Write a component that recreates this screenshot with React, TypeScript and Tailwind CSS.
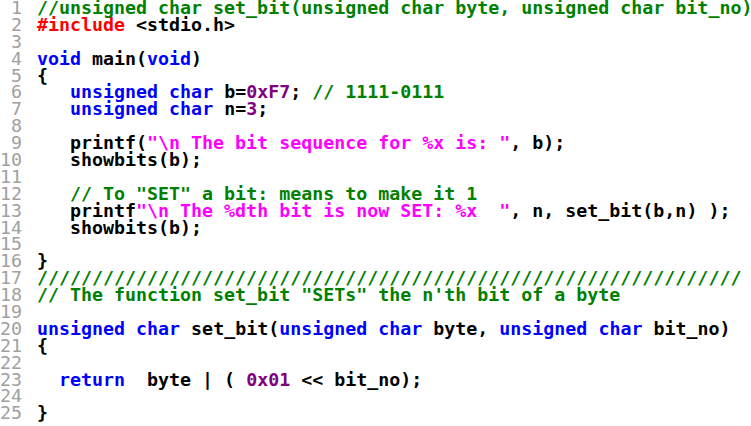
import React from "react";

type Seg = { t: string; c?: "kw" | "cm" | "st" | "nu" | "pp" };

const colors: Record<string, string> = {
  kw: "text-[#0000ff]",
  cm: "text-[#008000]",
  st: "text-[#ff00ff]",
  nu: "text-[#800080]",
  pp: "text-[#ff0000]",
};

const lines: Seg[][] = [
  [{ t: "//unsigned char set_bit(unsigned char byte, unsigned char bit_no)", c: "cm" }],
  [{ t: "#include", c: "pp" }, { t: " <stdio.h>" }],
  [],
  [{ t: "void", c: "kw" }, { t: " main(" }, { t: "void", c: "kw" }, { t: ")" }],
  [{ t: "{" }],
  [
    { t: "   " },
    { t: "unsigned", c: "kw" },
    { t: " " },
    { t: "char", c: "kw" },
    { t: " b=" },
    { t: "0xF7", c: "nu" },
    { t: "; " },
    { t: "// 1111-0111", c: "cm" },
  ],
  [
    { t: "   " },
    { t: "unsigned", c: "kw" },
    { t: " " },
    { t: "char", c: "kw" },
    { t: " n=" },
    { t: "3", c: "nu" },
    { t: ";" },
  ],
  [],
  [
    { t: "   printf(" },
    { t: '"\\n The bit sequence for %x is: "', c: "st" },
    { t: ", b);" },
  ],
  [{ t: "   showbits(b);" }],
  [],
  [{ t: "   " }, { t: '// To "SET" a bit: means to make it 1', c: "cm" }],
  [
    { t: "   printf" },
    { t: '"\\n The %dth bit is now SET: %x  "', c: "st" },
    { t: ", n, set_bit(b,n) );" },
  ],
  [{ t: "   showbits(b);" }],
  [],
  [{ t: "}" }],
  [{ t: "////////////////////////////////////////////////////////////////", c: "cm" }],
  [{ t: '// The function set_bit "SETs" the n\'th bit of a byte', c: "cm" }],
  [],
  [
    { t: "unsigned", c: "kw" },
    { t: " " },
    { t: "char", c: "kw" },
    { t: " set_bit(" },
    { t: "unsigned", c: "kw" },
    { t: " " },
    { t: "char", c: "kw" },
    { t: " byte, " },
    { t: "unsigned", c: "kw" },
    { t: " " },
    { t: "char", c: "kw" },
    { t: " bit_no)" },
  ],
  [{ t: "{" }],
  [],
  [
    { t: "  " },
    { t: "return", c: "kw" },
    { t: "  byte | ( " },
    { t: "0x01", c: "nu" },
    { t: " << bit_no);" },
  ],
  [],
  [{ t: "}" }],
];

export default function App() {
  return (
    <div className="w-[751px] h-[426px] bg-white overflow-hidden font-['DejaVu_Sans_Mono',monospace] font-bold text-[18.3px] leading-[16.9px] text-black">
      {lines.map((segs, i) => (
        <div key={i} className="flex h-[16.9px]">
          <span className="w-[22px] shrink-0 text-right text-[#a0a0a0] font-normal">{i + 1}</span>
          <pre className="ml-[15px] font-['DejaVu_Sans_Mono',monospace] whitespace-pre">
            {segs.map((s, j) => (
              <span key={j} className={s.c ? colors[s.c] : undefined}>
                {s.t}
              </span>
            ))}
          </pre>
        </div>
      ))}
    </div>
  );
}
